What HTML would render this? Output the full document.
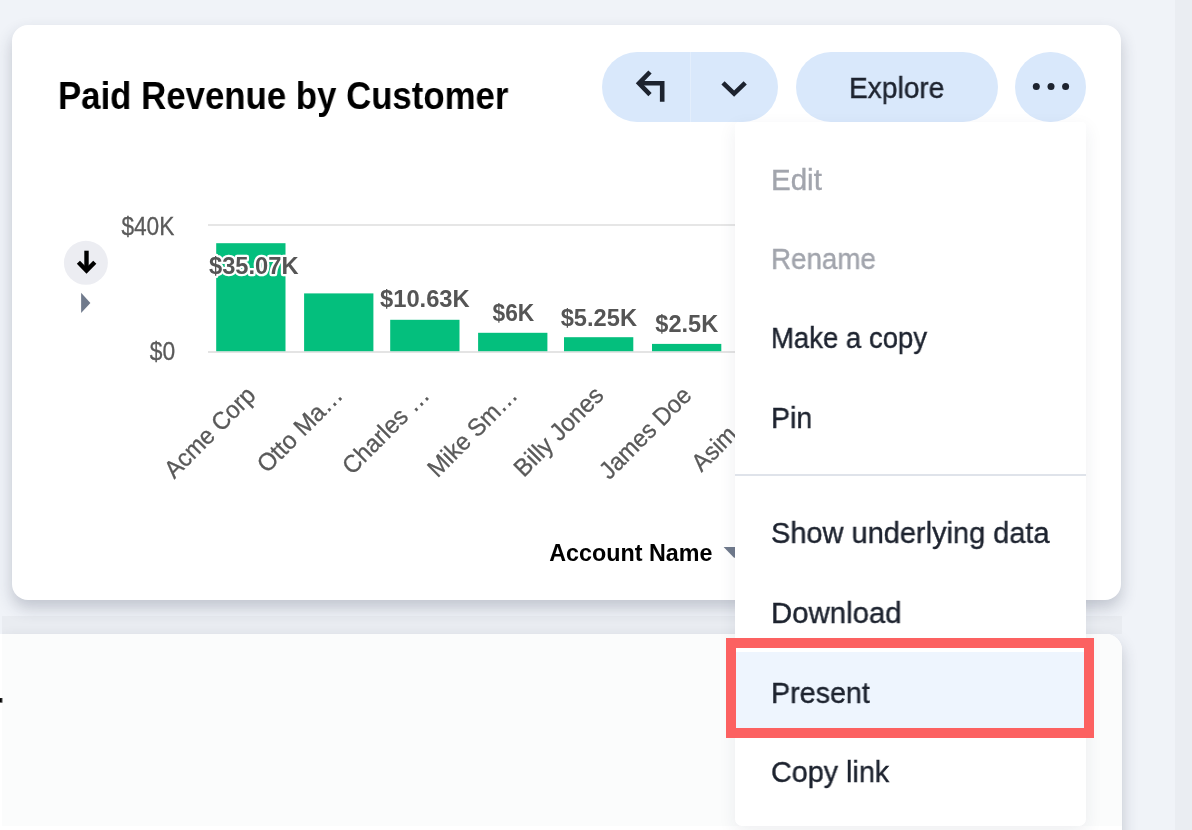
<!DOCTYPE html>
<html lang="en">
<head>
<meta charset="utf-8">
<title>Paid Revenue by Customer</title>
<style>
  html, body { margin: 0; padding: 0; }
  body {
    width: 1192px; height: 830px; overflow: hidden; position: relative;
    background: #f0f3f8;
    font-family: "Liberation Sans", sans-serif;
    color: #1d232f;
  }
  .abs { position: absolute; }
  .strip { left: 1175px; top: 0; width: 17px; height: 830px; background: #eaedf2; }
  .card1 {
    left: 12px; top: 25px; width: 1109px; height: 575px;
    background: #fff; border-radius: 16px;
    box-shadow: 0 8px 16px rgba(40, 50, 75, 0.24);
  }
  .wrap2 { left: 2px; top: 616px; width: 1190px; height: 214px; overflow: hidden; }
  .band { left: 0; top: 0; width: 1119.5px; height: 18px; background: rgba(70, 85, 70, 0.04); }
  .card2 {
    left: 0; top: 18px; width: 1119.5px; height: 240px;
    background: #fff; border-radius: 0 16px 0 0;
    box-shadow: 0 8px 16px rgba(40, 50, 75, 0.24);
  }
  .tint { left: 0; top: 0; width: 1119.5px; height: 192px; background: #fbfcfc; border-radius: 0 16px 0 0; }
  .t { position: absolute; white-space: nowrap; transform-origin: 0 0; line-height: 1; will-change: transform; }
  svg { will-change: transform; }
  .title { left: 57.5px; top: 76.5px; font-size: 38.4px; font-weight: bold; color: #000; transform: scaleX(.906); }
  .pill { background: #d9e8fb; border-radius: 35px; height: 70px; top: 52px; }
  .menu {
    left: 735px; top: 122px; width: 351px; height: 704px; background: #fff;
    border-radius: 4px 4px 7px 7px; box-shadow: 0 6px 18px rgba(40, 50, 75, 0.08);
  }
  .mi { left: 770.6px; font-size: 29.5px; color: #1d232f; -webkit-text-stroke: 0.4px #1d232f; }
  .mi.dis { color: #a2a5ad; -webkit-text-stroke: 0.4px #a2a5ad; }
  .divider { left: 735px; top: 474px; width: 351px; height: 2px; background: #dfe3ea; }
  .hl { left: 735px; top: 652px; width: 351px; height: 76px; background: #eef5fe; }
  .red { left: 726px; top: 638px; width: 348px; height: 80px; border: 10px solid #fc6161; }
</style>
</head>
<body>
  <div class="abs strip"></div>
  <div class="abs" style="left:0; top:634px; width:2px; height:196px; background:#fff;"></div>
  <div class="abs wrap2"><div class="abs band"></div><div class="abs card2"><div class="abs tint"></div></div></div>
  <div class="t" style="left:-11.3px; top:687.3px; font-size:38.4px; font-weight:bold; color:#000; transform:scaleX(.906);">r</div>
  <div class="abs card1"></div>

  <div class="t title">Paid Revenue by Customer</div>

  <!-- toolbar buttons -->
  <div class="abs pill" style="left:602px; width:176.3px;"></div>
  <div class="abs" style="left:690px; top:52px; width:1px; height:70px; background:#e3eefc;"></div>
  <div class="abs pill" style="left:796px; width:202.2px;"></div>
  <div class="abs pill" style="left:1015px; width:71.3px;"></div>
  <div class="t" style="left:849.2px; top:72.6px; font-size:29.4px; transform:scaleX(.957); -webkit-text-stroke:0.4px #1d232f;">Explore</div>
  <svg class="abs" style="left:0; top:0;" width="1192" height="830" viewBox="0 0 1192 830">
    <defs><filter id="halo" x="-10%" y="-30%" width="120%" height="160%"><feGaussianBlur stdDeviation="0.7"/></filter></defs>
    <!-- undo arrow -->
    <g fill="none" stroke="#1d232f" stroke-width="4.6">
      <path d="M650 72 L639 83.3 L650 94.6"/>
      <path d="M639 83.3 H662.2 V101.7"/>
      <path d="M723 82.8 L734.1 93.6 L745.2 82.8"/>
    </g>
    <g fill="#1d232f">
      <circle cx="1036.3" cy="86.4" r="3.5"/>
      <circle cx="1051" cy="86.4" r="3.5"/>
      <circle cx="1065.6" cy="86.4" r="3.5"/>
    </g>

    <!-- chart -->
    <rect x="208" y="224" width="600" height="2" fill="#e6e6e6"/>
    <rect x="208" y="351" width="600" height="2" fill="#e4e4e4"/>
    <g fill="#04bf7d">
      <rect x="216.2" y="243.2" width="69.3" height="108"/>
      <rect x="304.1" y="293.4" width="69.3" height="57.8"/>
      <rect x="390.2" y="319.8" width="69.3" height="31.4"/>
      <rect x="478.1" y="332.8" width="69.3" height="18.4"/>
      <rect x="564" y="337.2" width="69.3" height="14"/>
      <rect x="652" y="343.9" width="69.3" height="7.3"/>
      <rect x="739" y="346" width="69.3" height="5.2"/>
    </g>
    <circle cx="85.9" cy="262.8" r="22" fill="#ecedf2"/>
    <g fill="none" stroke="#000" stroke-width="4.4">
      <path d="M86.5 250.7 V271"/>
      <path d="M78.4 262.3 L86.5 270.6 L94.8 262.3"/>
    </g>
    <path d="M81.1 292.7 L90.4 303 L81.1 313.1 Z" fill="#707a8c"/>
    <path d="M723.6 547.1 H745 L734.3 558 Z" fill="#707a8c"/>

    <g font-family="'Liberation Sans', sans-serif" font-size="25.1" fill="#5a5a5a" stroke="#5a5a5a" stroke-width="0.3">
      <text transform="translate(121.4,234.9) scale(.904,1)">$40K</text>
      <text transform="translate(149.8,359.9) scale(.909,1)">$0</text>
    </g>
    <g font-family="'Liberation Sans', sans-serif" font-size="24.6" font-weight="bold" fill="#555">
      <text transform="translate(209,274.1) scale(.963,1)" stroke="#fff" stroke-width="4.6" stroke-linejoin="round" filter="url(#halo)">$35.07K</text>
      <text transform="translate(209,274.1) scale(.963,1)">$35.07K</text>
      <text transform="translate(380,307.3) scale(.965,1)">$10.63K</text>
      <text transform="translate(492.5,320.7) scale(.926,1)">$6K</text>
      <text transform="translate(560.7,325.8) scale(.962,1)">$5.25K</text>
      <text transform="translate(655.3,331.5) scale(.958,1)">$2.5K</text>
    </g>
    <g font-family="'Liberation Sans', sans-serif" font-size="24.7" fill="#595959" stroke="#595959" stroke-width="0.3" text-anchor="end">
      <text transform="translate(257,396.8) rotate(-45) scale(.947,1)">Acme Corp</text>
      <text transform="translate(344.2,396.8) rotate(-45) scale(.972,1)">Otto Ma…</text>
      <text transform="translate(431,396.8) rotate(-45) scale(.956,1)">Charles …</text>
      <text transform="translate(519,396.8) rotate(-45) scale(.956,1)">Mike Sm…</text>
      <text transform="translate(605,396.8) rotate(-45) scale(.975,1)">Billy Jones</text>
      <text transform="translate(693,396.8) rotate(-45) scale(.947,1)">James Doe</text>
      <text transform="translate(701.6,472.7) rotate(-45) scale(.947,1)" text-anchor="start">Asim …</text>
    </g>
    <text transform="translate(549.2,560.6) scale(.964,1)" font-family="'Liberation Sans', sans-serif" font-size="24.2" font-weight="bold" fill="#000">Account Name</text>
  </svg>

  <!-- menu -->
  <div class="abs menu"></div>
  <div class="abs divider"></div>
  <div class="abs hl"></div>
  <div class="t mi dis" style="top:165px; transform:scaleX(.999);">Edit</div>
  <div class="t mi dis" style="top:244.1px; transform:scaleX(.941);">Rename</div>
  <div class="t mi" style="top:323.4px; transform:scaleX(.933);">Make a copy</div>
  <div class="t mi" style="top:402.5px; transform:scaleX(.966);">Pin</div>
  <div class="t mi" style="top:518.3px; transform:scaleX(.982);">Show underlying data</div>
  <div class="t mi" style="top:598.3px; transform:scaleX(.995);">Download</div>
  <div class="t mi" style="top:678px; transform:scaleX(.972);">Present</div>
  <div class="t mi" style="top:756.5px; transform:scaleX(.9745);">Copy link</div>
  <div class="abs red"></div>
</body>
</html>
